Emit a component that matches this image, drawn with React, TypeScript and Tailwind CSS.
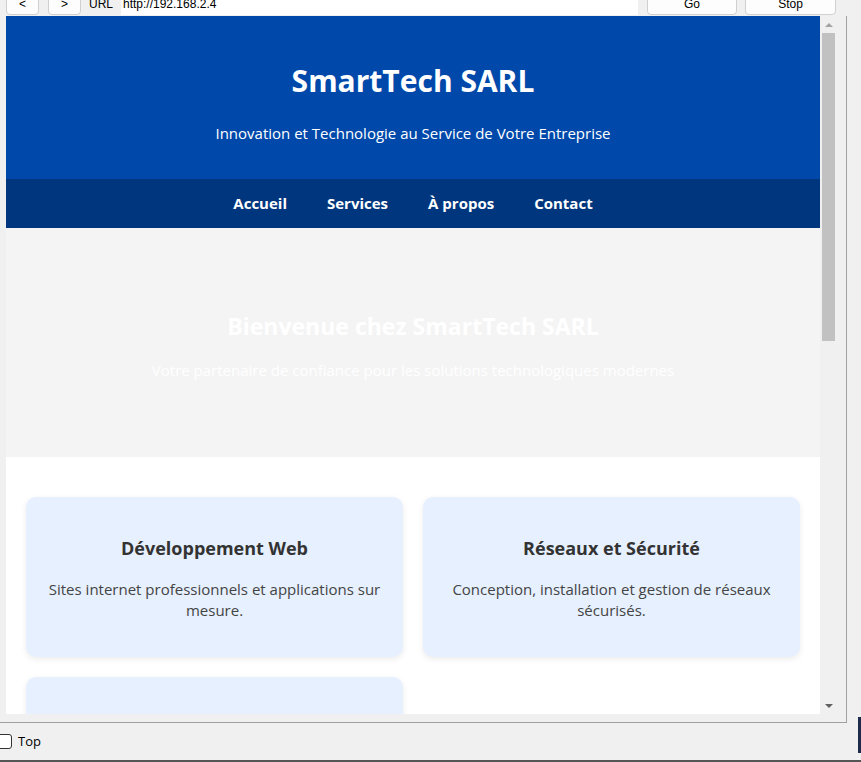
const services = [
  { title: "Développement Web", text: "Sites internet professionnels et applications sur mesure." },
  { title: "Réseaux et Sécurité", text: "Conception, installation et gestion de réseaux sécurisés." },
  { title: "Maintenance Informatique", text: "Support technique et maintenance de votre parc informatique." },
];

const navLinks = ["Accueil", "Services", "À propos", "Contact"];

function ChromeButton({ label, className }: { label: string; className: string }) {
  return (
    <div
      className={`h-[26px] -mt-[11px] flex items-end justify-center pb-[4px] bg-[#fdfdfd] border border-[#d0d0d0] rounded-[4px] text-[12px] leading-[12px] text-black ${className}`}
    >
      {label}
    </div>
  );
}

function Page() {
  return (
    <div className="font-['Open_Sans',sans-serif] text-[#333]">
      <header className="bg-[#0049ab] text-white text-center pt-[22px] pb-[19px]">
        <h1 className="text-[30px] font-bold leading-[43px] my-[21px]">SmartTech SARL</h1>
        <p className="text-[15px] leading-[21px] my-4">Innovation et Technologie au Service de Votre Entreprise</p>
      </header>
      <nav className="bg-[#00367d] h-[49px] flex items-center justify-center gap-10">
        {navLinks.map((l) => (
          <a key={l} className="text-white font-bold text-[15px] leading-[21px]">
            {l}
          </a>
        ))}
      </nav>
      <section className="bg-[#f4f4f4] text-white text-center pt-[60px] pb-[60px]">
        <h2 className="text-[23px] font-bold leading-8 mt-[22px] mb-0">Bienvenue chez SmartTech SARL</h2>
        <p className="text-[15px] leading-[21px] mt-[18px] mb-4">
          Votre partenaire de confiance pour les solutions technologiques modernes
        </p>
      </section>
      <section className="bg-white px-5 pt-10 pb-10 grid grid-cols-2 gap-5">
        {services.map((s) => (
          <div
            key={s.title}
            className="bg-[#e6f0ff] rounded-[10px] p-5 text-center shadow-[0_2px_6px_rgba(0,0,0,0.08)]"
          >
            <h3 className="text-[18px] font-bold leading-[24px] my-[19px] text-[#333]">{s.title}</h3>
            <p className="text-[15px] leading-[21px] my-4 text-[#444]">{s.text}</p>
          </div>
        ))}
      </section>
    </div>
  );
}

export default function App() {
  return (
    <div className="w-[861px] h-[762px] bg-[#f0f0f0] flex flex-col overflow-hidden font-['Liberation_Sans',sans-serif] relative">
      {/* browser toolbar */}
      <div className="h-[16px] flex items-start overflow-hidden shrink-0">
        <ChromeButton label="<" className="w-[33px] ml-[6px]" />
        <ChromeButton label=">" className="w-[33px] ml-[9px]" />
        <div className="ml-[8px] w-[32px] h-[15px] text-[12px] leading-[12px] flex items-end pb-[5px]">URL</div>
        <div className="w-[517px] h-[15px] bg-white text-[12px] leading-[12px] flex items-end pb-[5px] pl-[2px]">
          http://192.168.2.4
        </div>
        <ChromeButton label="Go" className="w-[90px] ml-[9px]" />
        <ChromeButton label="Stop" className="w-[91px] ml-[8px]" />
      </div>

      {/* frame */}
      <div className="h-[707px] w-[847px] border-r border-b border-[#a0a0a0] flex shrink-0">
        <div className="ml-[6px] h-[698px] w-[831px] flex bg-white">
          <div className="w-[814px] h-full overflow-hidden">
            <Page />
          </div>
          <div className="w-[17px] h-full bg-[#f0f0f0] flex flex-col items-center">
            <div className="h-[17px] flex items-center justify-center">
              <div className="w-0 h-0 border-l-[4px] border-r-[4px] border-b-[4px] border-l-transparent border-r-transparent border-b-[#a3a3a3]" />
            </div>
            <div className="w-[13px] h-[308px] bg-[#c1c1c1]" />
            <div className="flex-1" />
            <div className="h-[17px] flex items-center justify-center">
              <div className="w-0 h-0 border-l-[4px] border-r-[4px] border-t-[4px] border-l-transparent border-r-transparent border-t-[#606060]" />
            </div>
          </div>
        </div>
      </div>

      {/* bottom bar */}
      <div className="h-[37px] flex items-center shrink-0">
        <div className="w-[15px] h-[15px] -ml-[3px] border border-[#333] rounded-[3px] bg-white" />
        <span className="ml-[6px] text-[13px] text-black font-['Open_Sans',sans-serif]">Top</span>
      </div>
      <div className="h-[2px] bg-[#555] shrink-0" />
      <div className="absolute right-0 top-[717px] w-[3px] h-[36px] bg-[#1d2b4a]" />
    </div>
  );
}
